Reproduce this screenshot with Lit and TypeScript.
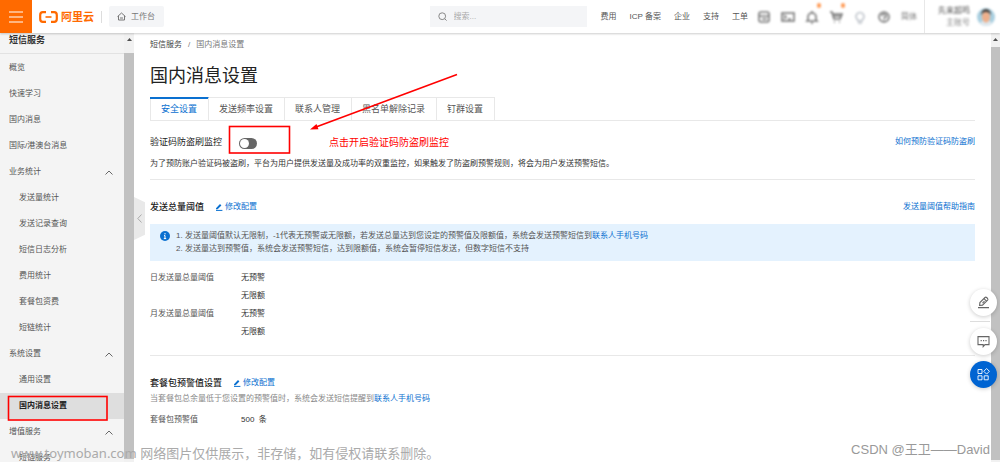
import { LitElement, html, css, svg, nothing } from "lit";
import { customElement, state } from "lit/decorators.js";
import { classMap } from "lit/directives/class-map.js";

interface MenuEntry {
  label: string;
  kind: "item" | "group" | "child";
}

const MENU: MenuEntry[] = [
  { label: "概览", kind: "item" },
  { label: "快速学习", kind: "item" },
  { label: "国内消息", kind: "item" },
  { label: "国际/港澳台消息", kind: "item" },
  { label: "业务统计", kind: "group" },
  { label: "发送量统计", kind: "child" },
  { label: "发送记录查询", kind: "child" },
  { label: "短信日志分析", kind: "child" },
  { label: "费用统计", kind: "child" },
  { label: "套餐包资费", kind: "child" },
  { label: "短链统计", kind: "child" },
  { label: "系统设置", kind: "group" },
  { label: "通用设置", kind: "child" },
  { label: "国内消息设置", kind: "child" },
  { label: "增值服务", kind: "group" },
  { label: "短链服务", kind: "child" },
];

const TABS = ["安全设置", "发送频率设置", "联系人管理", "黑名单解除记录", "钉群设置"];
const NAV = ["费用", "ICP 备案", "企业", "支持", "工单"];

const TOOLS = [
  { name: "应用", dot: false, pale: false, art: svg`<rect x="2" y="2" width="10" height="10" rx="2"/><path d="M2 6h10M5 9h5"/>` },
  { name: "命令行", dot: false, pale: false, art: svg`<rect x="1" y="3" width="12" height="8"/><path d="M3 5l2 2-2 2M7 9h3"/>` },
  { name: "消息", dot: true, pale: false, art: svg`<path d="M3 10V7a4 4 0 0 1 8 0v3l1 1H2zM6 13h2M7 1v2"/>` },
  { name: "购物车", dot: true, pale: false, art: svg`<path d="M1 2h2l2 7h6l2-5H4M4 6h8M5 12h1M10 12h1"/>` },
  { name: "提示", dot: false, pale: true, art: svg`<path d="M5 10a4 4 0 1 1 4 0v1H5zM5 13h4"/>` },
  { name: "帮助", dot: false, pale: false, art: svg`<circle cx="7" cy="7" r="5"/><path d="M5 6a2 2 0 1 1 2 2v1M7 10v1"/>` },
];

const pencil = html`<svg class="pencil" viewBox="0 0 8 8" aria-hidden="true">
  <path d="M1 5.2 5 1.1 6.4 2.4 2.6 6.3H1z" fill="currentColor" /><path d="M1 7.4h6.4" stroke="currentColor" />
</svg>`;

@customElement("console-header")
export class ConsoleHeader extends LitElement {
  static styles = css`
    :host {
      display: flex;
      align-items: center;
      height: 33px;
      flex: none;
      background: #fff;
      box-shadow: 0 1px 2px rgba(0, 0, 0, 0.2);
      position: relative;
      z-index: 2;
      color: #555;
    }
    button, input { font: inherit; color: inherit; border: 0; padding: 0; margin: 0; background: none; }
    a { color: inherit; text-decoration: none; }
    .menu { width: 32px; height: 33px; background: #ff6a00; flex: none; }
    .menu svg { width: 14px; height: 12px; display: block; margin: 0 auto; }
    .brand { display: flex; align-items: center; gap: 3px; margin-left: 7px; color: #ff6a00; font-size: 11px; font-weight: 700; }
    .brand svg { width: 19px; height: 12px; }
    .rule { width: 1px; height: 12px; background: #ddd; margin: 0 7px; }
    .bench { display: flex; align-items: center; gap: 5px; height: 21px; padding: 0 9px 0 8px; background: #f4f5f7; border-radius: 2px; color: #777; }
    .bench svg { width: 9px; height: 9px; }
    .search { display: flex; align-items: center; gap: 7px; width: 157px; box-sizing: border-box; height: 21px; padding: 0 8px; margin-left: auto; background: #f4f5f7; color: #888; }
    .search svg { width: 9px; height: 9px; flex: none; }
    .search input { flex: 1; min-width: 0; outline: 0; }
    .search input::placeholder { color: #aaa; opacity: 1; }
    nav { display: flex; gap: 13px; margin-left: 14px; white-space: nowrap; }
    .tools { display: flex; align-items: center; gap: 10px; margin: 0 7px 0 9px; color: #777; filter: blur(1px); }
    .tool { position: relative; width: 14px; height: 14px; }
    .tool svg { display: block; width: 14px; height: 14px; }
    .pale { color: #c0c5cc; }
    .dot { position: absolute; right: -2px; top: -7px; width: 4px; height: 5px; border-radius: 2px; background: #ff9a55; }
    .user { display: flex; align-items: center; gap: 6px; height: 33px; padding: 0 4px 0 13px; border-left: 1px solid #e8e8e8; text-align: right; }
    .names { filter: blur(1px); line-height: 12px; white-space: nowrap; }
    .names small { display: block; font-size: 8px; color: #888; }
    .user svg { width: 20px; height: 20px; filter: blur(1px); }
  `;

  render() {
    return html`
      <button class="menu" aria-label="菜单">
        <svg viewBox="0 0 14 12" stroke="#fff" stroke-width="1.2"><path d="M0 1h14M0 6h14M0 11h14" /></svg>
      </button>
      <a class="brand" href="#">
        <svg viewBox="0 0 19 12" fill="none" stroke="currentColor" stroke-width="2.2" aria-hidden="true">
          <path d="M7 1.2H3.8Q1.2 1.2 1.2 4v4q0 2.8 2.6 2.8H7M12 1.2h3.2q2.6 0 2.6 2.8v4q0 2.8-2.6 2.8H12" />
          <path d="M6.5 6h6" stroke-width="1.6" />
        </svg>
        <span>阿里云</span>
      </a>
      <span class="rule"></span>
      <button class="bench">
        <svg viewBox="0 0 9 9" fill="none" stroke="currentColor"><path d="M.5 4.6 4.5 1l4 3.6M1.5 4v4h6V4M3 6h3" /></svg>
        工作台
      </button>
      <label class="search">
        <svg viewBox="0 0 9 9" fill="none" stroke="currentColor"><circle cx="4.2" cy="4.2" r="3.4" /><path d="m6.6 6.6 2 2" /></svg>
        <input type="search" placeholder="搜索..." aria-label="搜索" />
      </label>
      <nav>${NAV.map((n) => html`<a href="#">${n}</a>`)}</nav>
      <div class="tools">
        ${TOOLS.map(
          (t) => html`<button class=${classMap({ tool: true, pale: t.pale })} aria-label=${t.name}>
            <svg viewBox="0 0 14 14" fill="none" stroke="currentColor" stroke-width="1.6">${t.art}</svg>
            ${t.dot ? html`<span class="dot"></span>` : nothing}
          </button>`
        )}
        <a href="#">简体</a>
      </div>
      <div class="user">
        <div class="names">先来超鸣<small>主账号</small></div>
        <svg viewBox="0 0 20 20" aria-hidden="true">
          <circle cx="10" cy="10" r="9" fill="#a9cfe0" />
          <path d="M4 17q1-4 6-4t6 4q-6 4-12 0z" fill="#dfe8ee" />
          <ellipse cx="10" cy="10" rx="4" ry="5.5" fill="#eeb08c" />
          <path d="M5 9q0-7 5-7t5 7q-1-4-5-4T5 9z" fill="#4d4440" />
        </svg>
      </div>
    `;
  }
}

@customElement("side-menu")
export class SideMenu extends LitElement {
  static styles = css`
    :host { display: flex; position: relative; flex: none; width: 134px; background: #f4f4f4; }
    .list { flex: 1; min-width: 0; overflow: hidden; }
    h2 { margin: 0; height: 21px; line-height: 14px; padding-left: 9px; box-sizing: border-box; font-size: 9px; color: #333; border-bottom: 1px solid #e2e2e2; }
    ul { list-style: none; margin: 0; }
    ul { padding: 0; }
    a, .group { display: flex; width: 100%; box-sizing: border-box; align-items: center; justify-content: space-between; height: 26px; padding: 0 11px 0 9px; color: #555; text-decoration: none; }
    .group { font: inherit; border: 0; background: none; }
    .child { padding-left: 19px; }
    .active { background: #dedede; color: #222; font-weight: 700; }
    .group svg { width: 8px; height: 5px; }
    .track { width: 10px; flex: none; background: #f1f1f1; display: flex; flex-direction: column; align-items: center; gap: 12px; padding: 4px 0 3px; box-sizing: border-box; }
    .track svg { width: 5px; height: 4px; flex: none; }
    .thumb { width: 10px; flex: 1; background: #c1c1c1; }
    .fold { position: absolute; left: 100%; top: 164px; width: 11px; height: 43px; padding: 0; border: 0; background: #e9e9e9; clip-path: polygon(0 0, 100% 12%, 100% 88%, 0 100%); }
    .fold svg { display: block; width: 5px; height: 9px; margin: 0 auto; }
    ul { margin-top: 1px; }
  `;

  render() {
    return html`
      <div class="list">
        <h2>短信服务</h2>
        <ul>
          ${MENU.map((m) =>
            m.kind === "group"
              ? html`<li><button class="group">${m.label}
                  <svg viewBox="0 0 8 5" fill="none" stroke="#666"><path d="M.5 4.5 4 1l3.5 3.5" /></svg>
                </button></li>`
              : html`<li><a href="#" class=${classMap({ child: m.kind === "child", active: m.label === "国内消息设置" })}>${m.label}</a></li>`
          )}
        </ul>
      </div>
      <div class="track"><svg viewBox="0 0 5 4"><path d="M0 4 2.5 1 5 4z" fill="#505050" /></svg><span class="thumb"></span></div>
      <button class="fold" aria-label="收起菜单">
        <svg viewBox="0 0 5 9" fill="none" stroke="#aaa"><path d="M4.5.5.8 4.5l3.7 4" /></svg>
      </button>
    `;
  }
}

@customElement("settings-page")
export class SettingsPage extends LitElement {
  @state() private tab = 0;

  static styles = css`
    :host { display: block; flex: 1; min-width: 0; overflow: hidden; padding: 5px 16px 0; box-sizing: border-box; background: #fff; color: #333; line-height: 14px; }
    a { color: #0a70d0; text-decoration: none; }
    .crumbs { display: flex; gap: 6px; color: #777; }
    .crumbs a { color: #444; }
    h1 { margin: 13px 0 10px; font-size: 18px; line-height: 22px; font-weight: 400; color: #222; }
    .tabs { display: flex; border-bottom: 1px solid #e8e8e8; }
    .tab { height: 23px; padding: 0 11px 0 10px; font: inherit; font-size: 9px; color: #555; background: none; border: 0 solid #e8e8e8; border-width: 1px 1px 0 0; }
    .tab:first-child { padding-left: 11px; }
    .on { color: #0a70d0; border-top-color: #0a70d0; box-shadow: inset 0 1px #0a70d0, inset 1px 0 #e8e8e8; }
    .bar { display: flex; align-items: center; }
    .bar .end { margin-left: auto; }
    h3, .bar label { margin: 0; font-size: 9px; font-weight: 400; color: #222; }
    h3 { font-weight: 500; }
    .guard { padding: 14px 0 8px; }
    .switch { appearance: none; width: 18px; height: 11px; margin: 2px 0 0 17px; border-radius: 6px; background: #666; padding: 1px; }
    .switch::before { content: ""; display: block; width: 9px; height: 9px; border-radius: 50%; background: #fff; }
    .switch:checked { background: #0a70d0; }
    .switch:checked::before { margin-left: auto; }
    p { margin: 0; }
    section { border-bottom: 1px solid #e8e8e8; }
    .first { padding-bottom: 8px; }
    .second { padding: 20px 0 14px; }
    .third { padding-top: 20px; border: 0; }
    .edit { display: flex; align-items: center; gap: 2px; margin-left: 11px; }
    .pencil { width: 8px; height: 8px; fill: none; }
    .notice { display: flex; gap: 6px; margin: 10px 0 8px; padding: 5px 10px 6px; background: #e4f2fe; color: #555; line-height: 13px; }
    .notice svg { width: 10px; height: 10px; margin-top: 2px; flex: none; }
    .notice ol { margin: 0; padding: 0; list-style: none; }
    dl { display: grid; grid-template-columns: 91px 1fr; line-height: 18px; margin: 0; }
    dt { grid-column: 1; color: #555; }
    dd { grid-column: 2; margin: 0; white-space: pre; }
    .hint { color: #888; margin: 2px 0 5px; }
  `;

  render() {
    return html`
      <div class="crumbs"><a href="#">短信服务</a><span>/</span><span>国内消息设置</span></div>
      <h1>国内消息设置</h1>
      <div class="tabs" role="tablist">
        ${TABS.map(
          (t, i) => html`<button role="tab" aria-selected=${i === this.tab} class=${classMap({ tab: true, on: i === this.tab })} @click=${() => (this.tab = i)}>${t}</button>`
        )}
      </div>
      <section class="first">
        <div class="bar guard">
          <label for="guard">验证码防盗刷监控</label>
          <input id="guard" class="switch" type="checkbox" role="switch" />
          <a class="end" href="#">如何预防验证码防盗刷</a>
        </div>
        <p>为了预防账户验证码被盗刷，平台为用户提供发送量及成功率的双重监控，如果触发了防盗刷预警规则，将会为用户发送预警短信。</p>
      </section>
      <section class="second">
        <div class="bar">
          <h3>发送总量阈值</h3>
          <a class="edit" href="#">${pencil}修改配置</a>
          <a class="end" href="#">发送量阈值帮助指南</a>
        </div>
        <div class="notice">
          <svg viewBox="0 0 10 10"><circle cx="5" cy="5" r="5" fill="#0a70d0" /><path d="M5 2v1.4M4 4.6h1v3M3.8 7.6h2.4" stroke="#fff" fill="none" /></svg>
          <ol>
            <li>1. 发送量阈值默认无限制，-1代表无预警或无限额，若发送总量达到您设定的预警值及限额值，系统会发送预警短信到<a href="#">联系人手机号码</a></li>
            <li>2. 发送量达到预警值，系统会发送预警短信，达到限额值，系统会暂停短信发送，但数字短信不支持</li>
          </ol>
        </div>
        <dl>
          <dt>日发送量总量阈值</dt><dd>无预警</dd><dd>无限额</dd>
          <dt>月发送量总量阈值</dt><dd>无预警</dd><dd>无限额</dd>
        </dl>
      </section>
      <section class="third">
        <div class="bar">
          <h3>套餐包预警值设置</h3>
          <a class="edit" href="#">${pencil}修改配置</a>
        </div>
        <p class="hint">当套餐包总余量低于您设置的预警值时，系统会发送短信提醒到<a href="#">联系人手机号码</a></p>
        <dl><dt>套餐包预警值</dt><dd>500  条</dd></dl>
      </section>
    `;
  }
}

@customElement("app-root")
export class AppRoot extends LitElement {
  static styles = css`
    :host { display: flex; flex-direction: column; position: relative; height: 100vh; overflow: hidden; background: #fff; font: 8px/14px "Liberation Sans", "Noto Sans CJK SC", sans-serif; }
    .body { display: flex; flex: 1; min-height: 0; }
    .track { width: 9px; flex: none; background: #f1f1f1; display: flex; flex-direction: column; align-items: center; gap: 6px; padding: 4px 0 2px; box-sizing: border-box; }
    .track svg { width: 5px; height: 4px; flex: none; }
    .thumb { width: 9px; flex: 1; background: #c1c1c1; }
    .float { position: absolute; right: 3px; top: 289px; display: flex; flex-direction: column; }
    .float button { width: 27px; height: 27px; padding: 0; border: 0; border-radius: 50%; background: #fff; color: #666; box-shadow: 0 1px 4px rgba(0, 0, 0, 0.2); display: grid; place-items: center; }
    .float hr { width: 20px; margin: 5px 0 6px; border: 0; border-top: 1px solid #ddd; }
    .float svg { width: 13px; height: 13px; }
    .float .primary { background: #0064d2; color: #fff; margin-top: 6px; }
    .marks { position: absolute; left: 0; top: 0; width: 1000px; height: 462px; pointer-events: none; z-index: 3; }
    .callout { position: absolute; left: 329px; top: 136px; font-size: 10px; color: #f00; z-index: 3; }
    .site, .author { position: absolute; z-index: 4; pointer-events: none; white-space: nowrap; line-height: 20px; }
    .site { left: 11px; bottom: -2px; font-size: 13px; color: #aaa; }
    .site span { font-family: "Noto Sans", sans-serif; }
    .author { right: 10px; bottom: 2px; font-size: 13px; color: #999; }
  `;

  render() {
    return html`
      <console-header></console-header>
      <div class="body">
        <side-menu></side-menu>
        <settings-page></settings-page>
        <div class="track"><svg viewBox="0 0 5 4"><path d="M0 4 2.5 1 5 4z" fill="#505050" /></svg><span class="thumb"></span></div>
      </div>
      <div class="float">
        <button aria-label="反馈">
          <svg viewBox="0 0 13 13" fill="none" stroke="currentColor" stroke-width="1.1"><path d="M1 11.6h11M2.6 9.4l.3-2.8L8 1.5q.8-.7 1.6 0l1 1q.7.8 0 1.6L5.5 9.2zM7 2.7l2.5 2.5M5.5 7.2l2-2" /></svg>
        </button>
        <hr />
        <button aria-label="咨询">
          <svg viewBox="0 0 13 13" fill="none" stroke="currentColor" stroke-width="1.1"><path d="M1 1.6h11v8H8l-1.8 2V9.6H1zM3.6 5.6h1.2M6 5.6h1.2M8.4 5.6h1.2" /></svg>
        </button>
        <button class="primary" aria-label="更多">
          <svg viewBox="0 0 13 13" fill="none" stroke="currentColor" stroke-width=".9"><path d="M1 1.5h4v4H1zM1 7.8h4v4H1zM7.2 7.8h4v4h-4zM9.6.5l2.8 2.8-2.8 2.8-2.8-2.8z" /></svg>
        </button>
      </div>
      <svg class="marks" viewBox="0 0 1000 462" fill="none" stroke="#f00" stroke-width="1.6" aria-hidden="true">
        <rect x="229.5" y="126.5" width="60" height="26.5" />
        <rect x="8.5" y="396.5" width="98.5" height="23.5" />
        <path d="M457 74.5 316 127" />
        <path d="m310 129.5 6.5-5.500 2 5.200z" fill="#f00" stroke="none" />
      </svg>
      <span class="callout">点击开启验证码防盗刷监控</span>
      <span class="site"><span>www.toymoban.com</span> 网络图片仅供展示，非存储，如有侵权请联系删除。</span>
      <span class="author">CSDN @王卫——David</span>
    `;
  }
}
